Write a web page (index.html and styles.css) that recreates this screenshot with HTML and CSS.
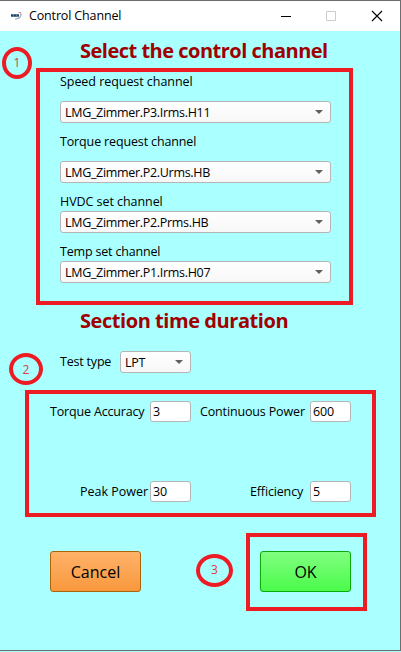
FILE: index.html
```html
<!DOCTYPE html>
<html lang="en">
<head>
<meta charset="utf-8">
<title>Control Channel</title>
<link rel="stylesheet" href="styles.css">
</head>
<body>
<div class="window">
  <header class="titlebar">
    <svg class="logo" width="12" height="10" viewBox="0 0 12 10"><path d="M0 3h8v3H0z" fill="#6b8496"/><path d="M0 4.500h2M3 4.500h2M6 4.500h2" stroke="#1f4366" stroke-width="1.500"/><path d="M4 8Q10 8 10 3" fill="none" stroke="#9aacbf" stroke-width="1.200"/><path d="M7.500 1.500q3-1 2.500 2" fill="none" stroke="#d78b92"/></svg>
    <span class="caption">Control Channel</span>
    <svg class="controls" width="117" height="12" viewBox="0 0 117 12"><path d="M0 6.500h10" stroke="#000"/><path d="M45.500 1.500h9v9h-9z" fill="none" stroke="#ccc"/><path d="M91 1l10 10M101 1L91 11" stroke="#000" stroke-width="1.100"/></svg>
  </header>
  <main>
    <h1 class="h-channel">Select the control channel</h1>
    <section class="channels">
      <div class="field"><label class="t-speed">Speed request channel</label><div class="select spaced"><span>LMG_Zimmer.P3.Irms.H11</span></div></div>
      <div class="field"><label class="t-torque">Torque request channel</label><div class="select spaced"><span>LMG_Zimmer.P2.Urms.HB</span></div></div>
      <div class="field"><label class="t-hvdc">HVDC set channel</label><div class="select"><span>LMG_Zimmer.P2.Prms.HB</span></div></div>
      <div class="field"><label class="t-temp">Temp set channel</label><div class="select"><span>LMG_Zimmer.P1.Irms.H07</span></div></div>
    </section>
    <h1 class="h-time">Section time duration</h1>
    <div class="test"><label class="t-test">Test type</label><div class="select"><span>LPT</span></div></div>
    <section class="times">
      <label class="t-acc">Torque Accuracy</label><div class="input">3</div>
      <label class="t-cont">Continuous Power</label><div class="input">600</div>
      <label class="t-peak">Peak Power</label><div class="input">30</div>
      <label class="t-eff">Efficiency</label><div class="input">5</div>
    </section>
    <div class="actions"><button class="cancel">Cancel</button><button class="ok">OK</button></div>
  </main>
  <div class="mark mark-channels"></div>
  <div class="mark mark-times"></div>
  <div class="mark mark-ok"></div>
  <div class="step step1">1</div>
  <div class="step step2">2</div>
  <div class="step step3">3</div>
</div>
</body>
</html>
```
FILE: styles.css
```css
* { box-sizing: border-box; }
body { margin: 0; background: #aff; font-family: "Open Sans", "Noto Sans", sans-serif; font-size: 12.5px; color: #000; }
.window { position: relative; width: 401px; height: 651px; background: #aff; border: 1px solid #6b6f70; border-left: 0; overflow: hidden; }
.titlebar { height: 30px; background: #fff; display: flex; align-items: center; padding-left: 11px; }
.caption { margin-left: 6px; line-height: 20px; white-space: nowrap; letter-spacing: -0.15px; }
.logo { margin-top: -1px; }
.controls { margin-left: auto; margin-right: 2px; }
main { padding-left: 50px; }
h1 { margin: 0 0 0 30px; font-size: 20px; line-height: 30px; font-weight: 700; color: #a00000; white-space: nowrap; height: 30px; }
.h-channel { margin-top: 5px; letter-spacing: -0.5px; }
.channels { margin: 5px 0 0 10px; width: 271px; display: flex; flex-direction: column; gap: 8px; }
label { display: block; line-height: 22px; height: 20px; white-space: nowrap; }
.t-speed { letter-spacing: -0.05px; }
.t-torque { letter-spacing: -0.14px; }
.t-hvdc { letter-spacing: -0.06px; }
.t-temp { letter-spacing: -0.18px; }
.select { height: 22px; width: 100%; border: 1px solid #b5b5b5; border-radius: 3px; background: linear-gradient(#fff, #f7f7f7); display: flex; align-items: center; justify-content: space-between; padding: 0 7px 0 4px; line-height: 20px; white-space: nowrap; }
.select span { height: 20px; line-height: 22px; letter-spacing: -0.31px; }
.select::after { content: ""; border: 4px solid transparent; border-top-color: #606060; border-bottom: 0; }
.spaced { margin-top: 10px; }
.h-time { margin-top: 23px; letter-spacing: -0.44px; }
.test { margin: 15px 0 0 10px; display: flex; }
.test label { width: 60px; letter-spacing: -0.2px; }
.test .select { width: 71px; }
.times { margin-top: 28px; display: grid; grid-template-columns: 100px 41px 9px 110px 41px; row-gap: 59px; }
.times label:nth-of-type(even) { grid-column: 4; }
.t-acc { letter-spacing: -0.17px; }
.t-cont { letter-spacing: -0.15px; }
.t-peak { padding-left: 30px; }
.t-eff { padding-left: 50px; letter-spacing: -0.15px; }
.input { height: 21px; border: 1px solid #b5b5b5; border-radius: 3px; background: #fff; padding-left: 2px; line-height: 19px; letter-spacing: -0.2px; }
.actions { margin-top: 49px; display: flex; gap: 119px; }
button { width: 91px; height: 41px; border-radius: 3px; padding: 0; font: 16px/38px "Open Sans", "Noto Sans", sans-serif; color: #000; }
.cancel { border: 1px solid #aa640c; background: linear-gradient(#ffb269, #f8983e); }
.ok { border: 1px solid #0baa0b; background: linear-gradient(#80ff80, #4bfa4b); }
.mark { position: absolute; border: 4px solid #ed1c24; }
.mark-channels { left: 36px; top: 67px; width: 317px; height: 237px; }
.mark-times { left: 25px; top: 389px; width: 351px; height: 127px; }
.mark-ok { left: 246px; top: 532px; width: 121px; height: 78px; }
.step { position: absolute; border: 4px solid #ed1c24; border-radius: 50%; display: flex; align-items: center; justify-content: center; color: #dc3c3c; font-size: 12px; line-height: 16px; }
.step1 { left: 2px; top: 46px; width: 30px; height: 32px; }
.step2 { left: 9px; top: 352px; width: 34px; height: 32px; padding-top: 1px; }
.step3 { left: 196px; top: 553px; width: 37px; height: 33px; padding-bottom: 1px; }
```
